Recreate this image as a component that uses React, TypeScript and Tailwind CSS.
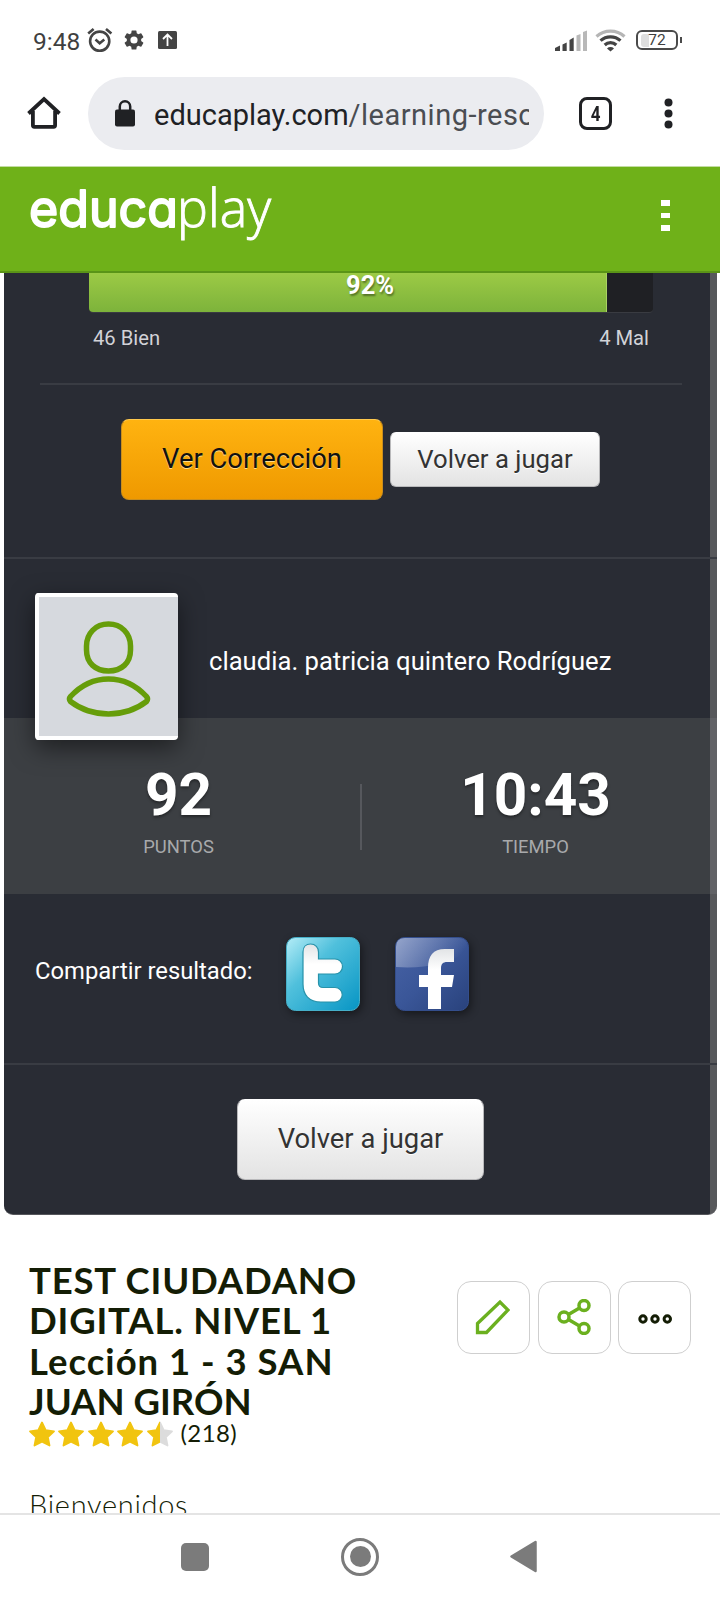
import type { ReactNode } from "react";

const STAR = "M13 1.500l3.700 7.700 8.300 1.100-6.100 5.800 1.600 8.400L13 20.600l-7.500 3.900 1.600-8.400L1 10.300l8.300-1.100z";

function StatusBar() {
  return (
    <div className="flex h-[77px] items-start pl-[33px] pr-[38px] pt-[24px] text-[#3f3f3f]">
      <span className="mt-px w-[54px] whitespace-nowrap text-[24.500px] leading-[34px]">9:48</span>
      <svg className="mt-[3px] h-[26px] w-[26px]" viewBox="0 0 26 26" fill="none" stroke="#444" strokeWidth="2.6">
        <circle cx="12.7" cy="14.2" r="9.6" />
        <path d="M1.2 6.5l5.4-4.6M24.4 6.5l-5.4-4.6" />
        <path d="M8.5 12.6l4.2 3.6 4.6-3.6" />
      </svg>
      <svg className="ml-[9px] mt-[4px] h-[24px] w-[24px]" viewBox="0 0 24 24" fill="#444">
        <path d="M19.14 12.94c.04-.3.06-.61.06-.94s-.02-.64-.07-.94l2.03-1.58a.49.49 0 0 0 .12-.61l-1.92-3.32a.49.49 0 0 0-.59-.22l-2.39.96a7 7 0 0 0-1.62-.94l-.36-2.54a.48.48 0 0 0-.48-.41h-3.84a.48.48 0 0 0-.47.41l-.36 2.54c-.59.24-1.13.57-1.62.94l-2.39-.96a.48.48 0 0 0-.59.22L2.74 8.87a.48.48 0 0 0 .12.61l2.03 1.58c-.05.3-.09.63-.09.94s.02.64.07.94l-2.03 1.58a.49.49 0 0 0-.12.61l1.92 3.32c.12.22.37.29.59.22l2.39-.96c.5.38 1.03.7 1.62.94l.36 2.54c.05.24.24.41.48.41h3.84c.24 0 .44-.17.47-.41l.36-2.54a7 7 0 0 0 1.62-.94l2.39.96c.22.08.47 0 .59-.22l1.92-3.32a.48.48 0 0 0-.12-.61zM12 15.6a3.6 3.6 0 1 1 0-7.2 3.6 3.6 0 0 1 0 7.2z" />
      </svg>
      <svg className="ml-[12px] mt-[7px] h-[18px] w-[19px]" viewBox="0 0 19 18">
        <rect width="19" height="18" rx="1.5" fill="#444" />
        <path d="M9.5 15V4M5 8l4.500-4.500L14 8" fill="none" stroke="#fff" strokeWidth="1.8" />
      </svg>
      <svg className="ml-auto mt-[6px] h-[21px] w-[33px]" viewBox="0 0 33 21">
        <path d="M0 21v-3l5-2.500v5.500zM7.500 21v-6.500l4.200-2v8.500zM14.500 21V10l4.200-2.500V21z" fill="#444" />
        <path d="M21.500 21V5.500l4-1.500V21zM28 21V2l4-1.500V21z" fill="#b8b8b8" />
      </svg>
      <svg className="ml-[7px] mt-[4px] h-[24px] w-[32px]" viewBox="0 0 32 24" fill="none" strokeWidth="3.200">
        <path d="M1.500 8.500a21 21 0 0 1 28 0" stroke="#b5b5b5" />
        <path d="M5.500 12.600a15 15 0 0 1 20 0M9.700 17a8.500 8.500 0 0 1 11.600 0" stroke="#444" />
        <path d="M12 20.500a5 5 0 0 1 7 0L15.500 23.500z" fill="#444" />
      </svg>
      <div className="ml-[9px] mt-[6px] flex items-center">
        <div className="flex h-[20px] w-[42px] items-center rounded-[6px] border-2 border-[#4a4a4a] pl-[3px]">
          <div className="flex h-[13px] w-[32px] items-center justify-center rounded-[3px] bg-[linear-gradient(90deg,#dedede_8px,transparent_8px)] pt-[2px] text-[15.500px] leading-none">72</div>
        </div>
        <div className="ml-[1.500px] h-[6px] w-[2.500px] bg-[#4a4a4a]" />
      </div>
    </div>
  );
}

function AddressBar() {
  return (
    <div className="flex h-[89px] items-start">
      <svg className="ml-[27px] mt-[19px] h-[34px] w-[34px]" viewBox="0 0 34 34" fill="none" stroke="#202124" strokeWidth="3.800">
        <path d="M1.500 17.500L17 3l15.500 14.500M5.900 15v14.300q0 1.500 1.500 1.500h19.200q1.500 0 1.500-1.500V15" />
      </svg>
      <div className="ml-[27px] flex h-[73px] w-[456px] items-center overflow-hidden rounded-full bg-[#ebecf0]">
        <svg className="ml-[27px] h-[27px] w-[20px] shrink-0" viewBox="0 0 20 27">
          <rect y="9.500" width="20" height="17" rx="2" fill="#202124" />
          <path d="M4.800 11V6.500a5.200 5.200 0 0 1 10.400 0V11" fill="none" stroke="#202124" strokeWidth="2.500" />
        </svg>
        <div className="ml-[19px] mt-[2px] w-[375px] shrink-0 overflow-hidden whitespace-nowrap text-[29px] leading-[40px] text-[#4a4d52]">
          <span className="text-[#202124]">educaplay.com</span><span className="tracking-[0.500px]">/learning-reso</span>
        </div>
      </div>
      <div className="ml-[35px] mt-[20px] flex h-[33px] w-[33px] items-center justify-center rounded-[8px] border-[3px] border-[#202124] text-[20px] font-bold leading-none text-[#202124]">
        <span className="scale-x-85">4</span>
      </div>
      <svg className="ml-[52px] mt-[21px] h-[31px] w-[9px]" viewBox="0 0 9 31" fill="#202124">
        <circle cx="4.500" cy="4.500" r="4" /><circle cx="4.500" cy="15.500" r="4" /><circle cx="4.500" cy="26.500" r="4" />
      </svg>
    </div>
  );
}

function SiteHeader() {
  return (
    <div className="flex h-[107px] items-start border-b-2 border-t border-b-[#5a9417] border-t-[#c3dca2] bg-[#6fb119]">
      <svg className="ml-[28px] mt-[4px] h-[84px] w-[250px]" viewBox="0 0 250 84" fill="#fff">
        <text x="1" y="56" fontSize="51" fontWeight="400" textLength="149" lengthAdjust="spacingAndGlyphs" stroke="#fff" strokeWidth="1.900" strokeLinejoin="round" className="font-['Inter',sans-serif] [font-feature-settings:'cv11']">educa</text>
        <text x="149" y="56" fontSize="54" fontWeight="300" textLength="94" lengthAdjust="spacingAndGlyphs" stroke="#fff" strokeWidth="0.900" className="font-['Open_Sans',sans-serif]">play</text>
      </svg>
      <div className="ml-auto mr-[50px] mt-[33px] flex flex-col gap-[7px]">
        <i className="h-[5.500px] w-[9px] bg-white" />
        <i className="h-[5.500px] w-[9px] bg-white" />
        <i className="h-[5.500px] w-[9px] bg-white" />
      </div>
    </div>
  );
}

function WhiteButton({ className, children }: { className: string; children: ReactNode }) {
  return (
    <button className={"flex items-center justify-center whitespace-nowrap border border-[#b9b9bb] border-t-white bg-linear-to-b from-white to-[#e3e3e3] leading-none text-[#333] [text-shadow:0_1px_0_#fff] " + className}>
      {children}
    </button>
  );
}

function ResultPanel() {
  return (
    <div className="ml-[4px] flex h-[942px] w-[713px] flex-col overflow-hidden rounded-b-[9px] border-b border-[#55565b] bg-[linear-gradient(90deg,#292c34_706px,#57585b_706px)]">
      <div className="flex h-[284px] flex-col">
        <div className="ml-[85px] flex h-[40px] w-[564px] rounded-b-[4px] border-b border-[#393b41] bg-[#1f2024]">
          <div className="relative w-[518px] rounded-bl-[4px] border-r border-[#a9d264] bg-linear-to-b from-[#9cca45] to-[#7db33b]">
            <span className="absolute left-[257px] top-[-6px] text-[25.500px] font-bold leading-[36px] text-white [text-shadow:1px_2px_2px_#0006]">92%</span>
          </div>
        </div>
        <div className="ml-[89px] mt-[10px] flex w-[556px] justify-between text-[20.200px] leading-[30px] text-[#d2d3d8]">
          <span>46 Bien</span>
          <span>4 Mal</span>
        </div>
        <div className="ml-[36px] mt-[30px] h-[2px] w-[642px] bg-[#393c43]" />
        <div className="ml-[117px] mt-[34px] flex items-center gap-[7px]">
          <button className="flex h-[81px] w-[262px] items-center justify-center whitespace-nowrap rounded-[8px] border border-[#c98d1c] border-t-[#ffc94d] bg-linear-to-b from-[#ffb310] to-[#ef9900] text-[27.400px] leading-none text-[#111] [text-shadow:0_1px_0_#ffdc8c]">Ver Corrección</button>
          <WhiteButton className="h-[55px] w-[210px] rounded-[6px] text-[25.700px]">Volver a jugar</WhiteButton>
        </div>
      </div>
      <div className="relative z-10 h-[161px] border-t-2 border-[#393c43]">
        <div className="absolute left-[31px] top-[34px] flex h-[147px] w-[143px] items-center justify-center rounded-[4px] border-4 border-r-0 border-white bg-[#d6d9de] shadow-[0_8px_24px_rgba(0,0,0,0.5)]">
          <svg className="h-[139px] w-[139px]" viewBox="0 0 139 139" fill="none" stroke="#669d0a" strokeWidth="5.500">
            <path d="M69.500 27c13 0 22 9.500 22 22v4c0 13-9 21-22 21s-22-8-22-21v-4c0-12.500 9-22 22-22z" />
            <path d="M31.500 99.500C53 76 86 76 107.500 99.500Q109.500 102 107.500 104.500C86 121 53 121 31.500 104.500Q29.500 102 31.500 99.500z" />
          </svg>
        </div>
        <div className="ml-[205px] mt-[84px] whitespace-nowrap text-[25.650px] leading-[36px] text-white">claudia. patricia quintero Rodríguez</div>
      </div>
      <div className="flex h-[176px] items-start bg-[linear-gradient(90deg,#3c3f43_706px,#616266_706px)]">
        <div className="w-[349px] pt-[41px] text-center">
          <div className="text-[58.500px] font-bold leading-[72px] text-white [text-shadow:0_2px_3px_#0006]">92</div>
          <div className="mt-px text-[18.400px] leading-[29px] text-[#a8a9ab]">PUNTOS</div>
        </div>
        <div className="ml-[7px] mt-[66px] h-[66px] w-[2px] bg-[#56585d]" />
        <div className="w-[347px] pt-[41px] text-center">
          <div className="text-[58.500px] font-bold leading-[72px] text-white [text-shadow:0_2px_3px_#0006]">10:43</div>
          <div className="mt-px text-[18.400px] leading-[29px] text-[#a8a9ab]">TIEMPO</div>
        </div>
      </div>
      <div className="flex h-[169px] items-start pl-[31px] pt-[43px]">
        <div className="mt-[16px] w-[251px] whitespace-nowrap text-[23.800px] leading-[36px] text-white">Compartir resultado:</div>
        <svg className="h-[74px] w-[74px] overflow-visible drop-shadow-[2px_3px_4px_#0007]" viewBox="0 0 74 74">
          <defs>
            <linearGradient id="tw" x1="0" y1="0" x2="1" y2="1"><stop offset="0" stopColor="#b4edf7" /><stop offset=".38" stopColor="#50c0dc" /><stop offset="1" stopColor="#0795c4" /></linearGradient>
            <linearGradient id="tt" x1="0" y1="0" x2="0" y2="1"><stop offset="0" stopColor="#e2e4e6" /><stop offset=".35" stopColor="#fff" /></linearGradient>
          </defs>
          <rect x=".5" y=".5" width="73" height="73" rx="9" fill="url(#tw)" stroke="#46afc8" />
          <path d="M24.500 7c5 0 8 3.500 8 8v7H49a7 7 0 0 1 0 15H32.500v9c0 3 1.500 4.500 4.500 4.500h12a7 7 0 0 1 0 14.500H35C23 65 17 58 17 47V15c0-5 3-8 7.500-8z" fill="url(#tt)" stroke="#2792aa" strokeWidth="1.200" />
        </svg>
        <svg className="ml-[35px] h-[74px] w-[74px] overflow-visible drop-shadow-[2px_3px_4px_#0007]" viewBox="0 0 74 74">
          <defs>
            <linearGradient id="fb" x1="0" y1="0" x2="1" y2="1"><stop offset="0" stopColor="#4863a6" /><stop offset=".5" stopColor="#3a5698" /><stop offset="1" stopColor="#29427c" /></linearGradient>
            <linearGradient id="gl" x1="0" y1="0" x2="1" y2=".3"><stop offset="0" stopColor="#fff" stopOpacity=".42" /><stop offset="1" stopColor="#fff" stopOpacity="0" /></linearGradient>
          </defs>
          <rect x=".5" y=".5" width="73" height="73" rx="9" fill="url(#fb)" stroke="#344e8c" />
          <path d="M1 10q0-9 9-9h54q8 0 8 8v6Q42 33 1 30z" fill="url(#gl)" />
          <path d="M33 72V50h-9V38h9v-7c0-12 5-19 17-19h9v13h-7c-4 0-6 2-6 6v7h13l-2 12H46v22z" fill="url(#tt)" />
        </svg>
      </div>
      <div className="flex flex-1 items-start border-t-2 border-[#393c43] pl-[233px] pt-[34px]">
        <WhiteButton className="h-[81px] w-[247px] rounded-[8px] text-[27.400px]">Volver a jugar</WhiteButton>
      </div>
    </div>
  );
}

function ActionButton({ children }: { children: ReactNode }) {
  return <button className="flex h-[73px] w-[73px] items-center justify-center rounded-[14px] border border-[#cfcfcf] bg-white">{children}</button>;
}

function Details() {
  return (
    <div className="flex h-[298px] items-start overflow-hidden pl-[29px] pr-[29px] font-['Lato',sans-serif] text-[#141d05]">
      <div>
        <h1 className="mt-[45px] whitespace-nowrap text-[36.500px] font-bold leading-[40.300px]">
          <span className="block tracking-[0.800px]">TEST CIUDADANO</span>
          <span className="block tracking-[0.800px]">DIGITAL. NIVEL 1</span>
          <span className="block tracking-[1px]">Lección 1 - 3 SAN</span>
          <span className="block tracking-[0px]">JUAN GIRÓN</span>
        </h1>
        <div className="-mt-px flex h-[28px] items-center">
          <div className="flex gap-[3.400px]">
            {[0, 1, 2, 3, 4].map((i) => (
              <svg key={i} className="h-[26px] w-[26px]" viewBox="0 0 26 26">
                <defs>
                  <linearGradient id={"s" + i} gradientUnits="userSpaceOnUse" x1="0" y1="0" x2="26" y2="0"><stop offset={i === 4 ? ".5" : "1"} stopColor="#f1c40f" /><stop offset={i === 4 ? ".5" : "1"} stopColor="#dcdcdc" /></linearGradient>
                </defs>
                <path d={STAR} fill={"url(#s" + i + ")"} stroke={"url(#s" + i + ")"} strokeWidth="1.800" strokeLinejoin="round" />
              </svg>
            ))}
          </div>
          <span className="-mt-[2px] ml-[8px] text-[24px] leading-[28px] tracking-[0.400px]">(218)</span>
        </div>
        <p className="mt-[39px] whitespace-nowrap text-[29px] font-light leading-[36px] tracking-[0.700px]">Bienvenidos</p>
      </div>
      <div className="ml-auto mt-[66px] flex gap-[7.500px]">
        <ActionButton>
          <svg className="-ml-[4px] -mt-[2px] h-[36px] w-[36px]" viewBox="0 0 36 36" fill="none" stroke="#6bb01f" strokeWidth="3.300">
            <path d="M3.500 33.500V24.500L26 3L34 11L12.500 33.500z" />
          </svg>
        </ActionButton>
        <ActionButton>
          <svg className="-mt-[2px] h-[36px] w-[34px]" viewBox="0 0 34 36" fill="none" stroke="#6bb01f" strokeWidth="3.500">
            <circle cx="7" cy="18" r="5" /><circle cx="27" cy="6.500" r="5" /><circle cx="27" cy="29.500" r="5" />
            <path d="M11.500 15.500l11-6.500M11.500 20.500l11 6.500" />
          </svg>
        </ActionButton>
        <ActionButton>
          <svg className="mt-[3px] h-[10px] w-[34px]" viewBox="0 0 34 10" fill="none" stroke="#141d05" strokeWidth="3">
            <circle cx="5" cy="5" r="3.200" /><circle cx="17" cy="5" r="3.200" /><circle cx="29.300" cy="5" r="3.200" />
          </svg>
        </ActionButton>
      </div>
    </div>
  );
}

function NavBar() {
  return (
    <div className="flex h-[87px] items-center border-t-2 border-[#e4e4e4] pb-[2px] pl-[181px]">
      <div className="h-[28px] w-[28px] rounded-[5px] bg-[#7b7b7b]" />
      <div className="ml-[132px] flex h-[38px] w-[38px] items-center justify-center rounded-full border-[3px] border-[#7b7b7b]">
        <div className="h-[21px] w-[21px] rounded-full bg-[#7b7b7b]" />
      </div>
      <svg className="ml-[131px] h-[33px] w-[27px]" viewBox="0 0 27 33">
        <path d="M1.500 16.500L25.500 2v29z" fill="#7b7b7b" stroke="#7b7b7b" strokeWidth="2.500" strokeLinejoin="round" />
      </svg>
    </div>
  );
}

export default function App() {
  return (
    <div className="h-[1600px] w-[720px] overflow-hidden bg-white font-['Roboto',sans-serif]">
      <StatusBar />
      <AddressBar />
      <SiteHeader />
      <ResultPanel />
      <Details />
      <NavBar />
    </div>
  );
}
